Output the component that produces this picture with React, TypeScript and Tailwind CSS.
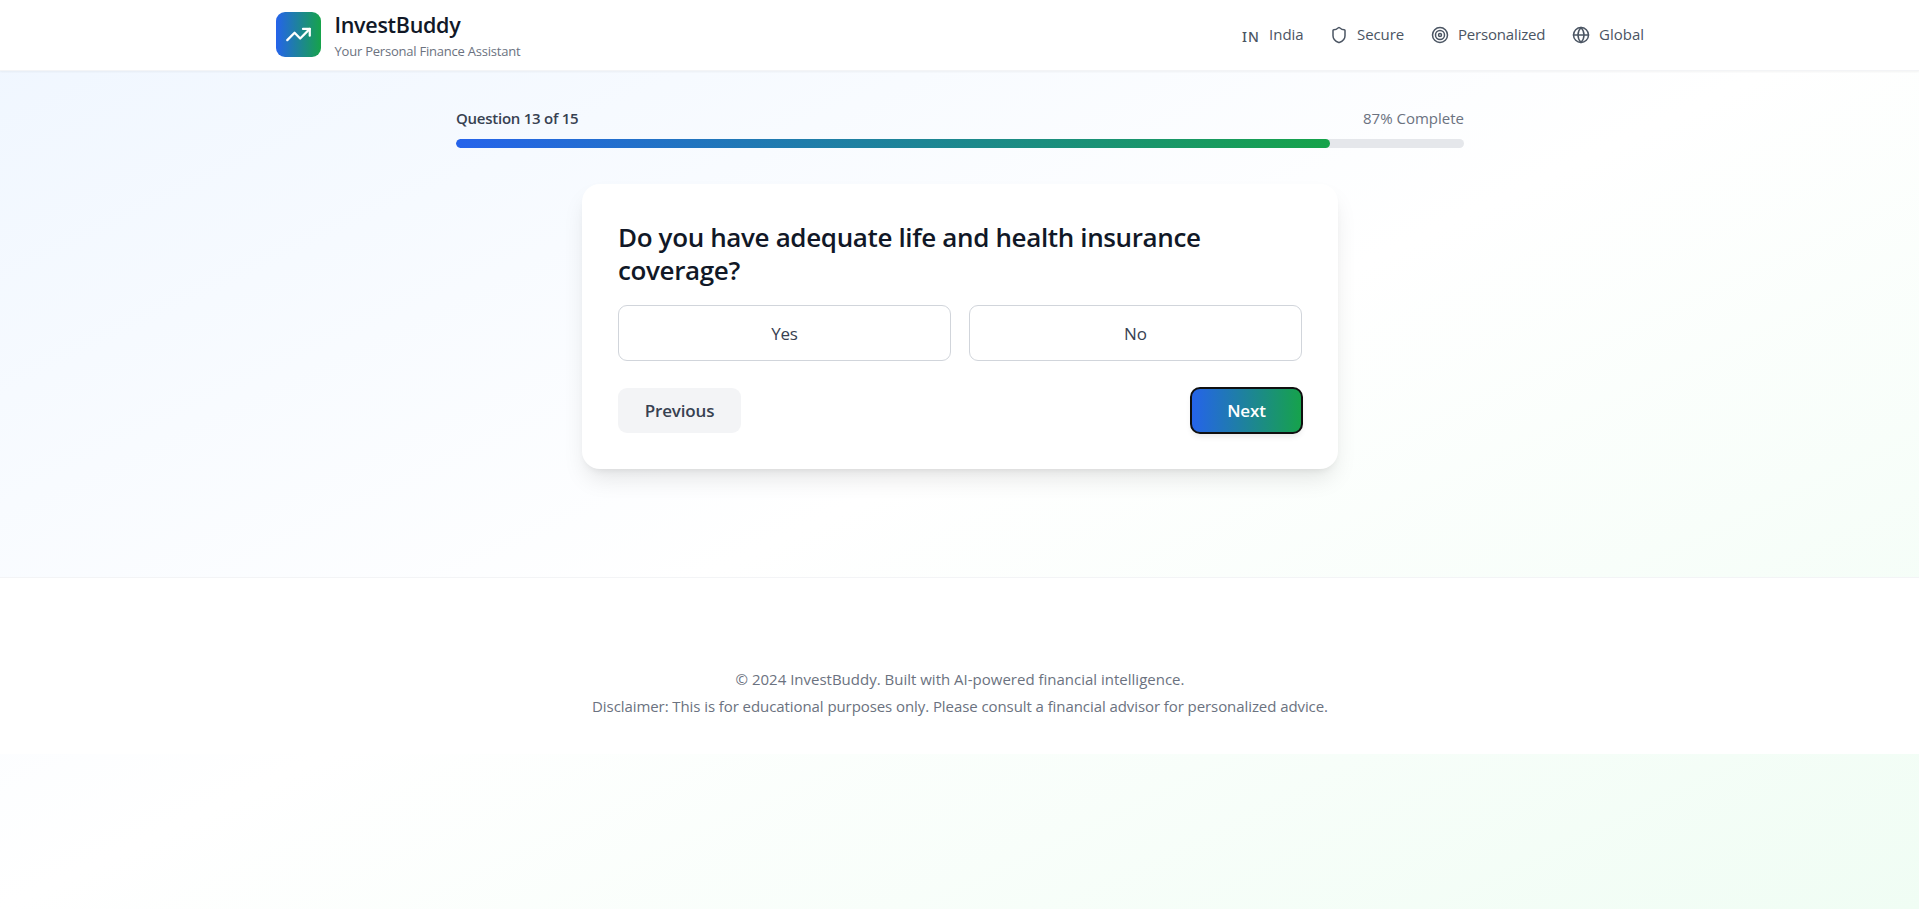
import { Globe, Shield, Target, TrendingUp } from "lucide-react";

function Header() {
  return (
    <header className="h-[71px] border-b border-[#f3f4f6] bg-white pl-px shadow-[0_1px_2px_0_rgba(0,0,0,0.05)]">
      <div className="mx-auto flex h-[69px] max-w-[1440px] items-center justify-between px-9">
        <div className="flex items-center gap-[13.5px]">
          <div className="flex size-[45px] items-center justify-center rounded-[9px] bg-linear-to-r/srgb from-[#2563eb] to-[#16a34a]">
            <TrendingUp className="size-[27px] text-white" />
          </div>
          <div className="pt-[2px]">
            <h1 className="text-[21.5px] leading-[26px] font-semibold tracking-[-0.3px] text-[#111827]">InvestBuddy</h1>
            <p className="mt-[4px] text-[13px] leading-[18px] tracking-[-0.22px] text-[#6b7280]">
              Your Personal Finance Assistant
            </p>
          </div>
        </div>
        <div className="flex items-center gap-[27px] text-[15px] leading-[20px] whitespace-nowrap text-[#4b5563]">
          <div className="flex items-center gap-[9px]">
            <span className="w-[18px] pt-[4px] font-['Noto_Sans',sans-serif] text-[14px] font-medium tracking-[1px]">IN</span>
            <span className="w-[34px] pb-[2px]">India</span>
          </div>
          <div className="flex items-center gap-[9px]">
            <Shield className="size-[18px]" />
            <span className="w-[47px] pb-[2px] tracking-[-0.1px]">Secure</span>
          </div>
          <div className="flex items-center gap-[9px]">
            <Target className="size-[18px]" />
            <span className="w-[87px] pb-[2px] tracking-[-0.18px]">Personalized</span>
          </div>
          <div className="flex items-center gap-[9px]">
            <Globe className="size-[18px]" />
            <span className="w-[45px] pb-[2px]">Global</span>
          </div>
        </div>
      </div>
    </header>
  );
}

function Progress() {
  return (
    <div className="mx-auto w-[1008px]">
      <div className="flex items-center justify-between text-[15px] leading-[23px]">
        <span className="font-semibold tracking-[-0.25px] text-[#374151]">Question 13 of 15</span>
        <span className="text-[#6b7280]">87% Complete</span>
      </div>
      <div className="mt-[9px] h-[9px] w-full overflow-hidden rounded-full bg-[#e5e7eb]">
        <div className="h-full w-[86.7%] rounded-full bg-linear-to-r/srgb from-[#2563eb] to-[#16a34a]" />
      </div>
    </div>
  );
}

function QuestionCard() {
  return (
    <section className="mx-auto mt-9 w-[756px] rounded-[18px] bg-white p-9 shadow-[0_13px_23px_-4px_rgba(0,0,0,0.1),0_5px_8px_-5px_rgba(0,0,0,0.1)]">
      <h2 className="pt-px text-[26px] leading-[33px] font-semibold tracking-[-0.36px] text-[#111827]">
        Do you have adequate life and health insurance
        <br />
        coverage?
      </h2>
      <div className="mt-[18px] grid grid-cols-2 gap-[18px] text-[17px] text-[#374151]">
        <button className="h-14 rounded-[9px] border border-[#d1d5db] pt-[2px] tracking-[-0.3px]">Yes</button>
        <button className="h-14 rounded-[9px] border border-[#d1d5db] pt-[2px]">No</button>
      </div>
      <div className="mt-[27px] flex justify-between text-[17px] font-semibold tracking-[-0.15px]">
        <button className="h-[45px] w-[123px] rounded-[9px] bg-[#f3f4f6] text-[#374151]">Previous</button>
        <button className="h-[45px] w-[111px] rounded-[9px] bg-linear-to-r/srgb from-[#2563eb] to-[#16a34a] text-white shadow-[0_4px_6px_-1px_rgba(0,0,0,0.1)] outline-2 -outline-offset-1 outline-[#101010]">
          Next
        </button>
      </div>
    </section>
  );
}

export default function App() {
  return (
    <div className="min-h-screen bg-linear-to-br/srgb from-[#eff6ff] via-white to-[#f0fdf4] font-['Open_Sans','Noto_Sans',sans-serif]">
      <Header />
      <main className="h-[506px] pt-9 pl-px">
        <Progress />
        <QuestionCard />
      </main>
      <footer className="h-[177px] border-t border-[#f3f4f6] bg-white pt-[88px] pl-px text-center text-[15px] leading-[27px] text-[#6b7280]">
        <p>© 2024 InvestBuddy. Built with AI-powered financial intelligence.</p>
        <p className="tracking-[-0.077px]">
          Disclaimer: This is for educational purposes only. Please consult a financial advisor for personalized advice.
        </p>
      </footer>
    </div>
  );
}
